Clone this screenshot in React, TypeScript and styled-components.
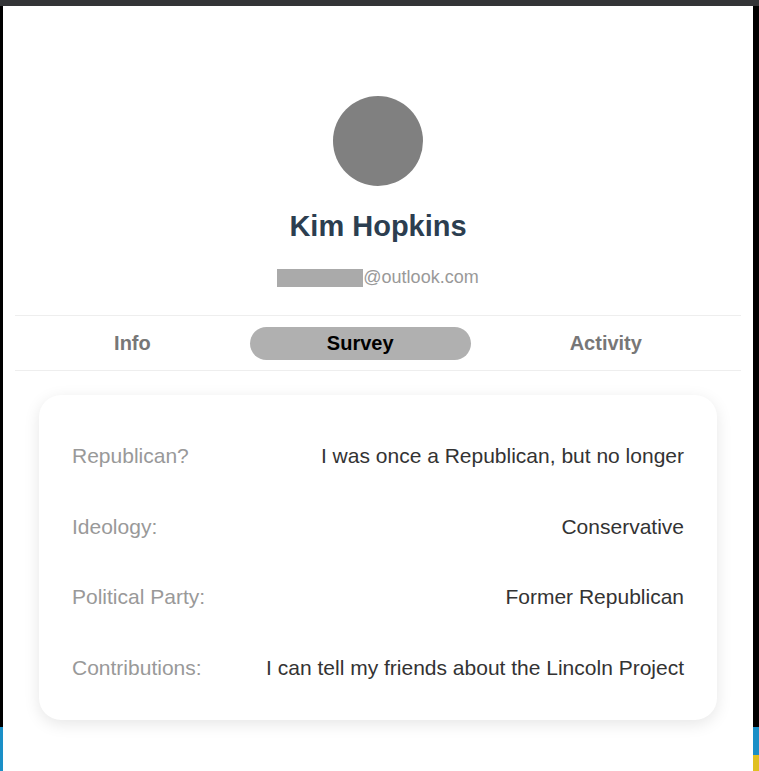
import React from "react";
import styled, { createGlobalStyle } from "styled-components";

const Global = createGlobalStyle`
  html, body { margin: 0; padding: 0; background: #000; }
  body { font-family: "Liberation Sans", Arial, sans-serif; }
  * { box-sizing: border-box; }
`;

const Page = styled.div`
  width: 759px;
  height: 771px;
  display: flex;
  flex-direction: column;
  overflow: hidden;
  background: #000;
`;

const TopBar = styled.div`
  height: 6px;
  flex: none;
  background: #333437;
`;

const Body = styled.div`
  flex: 1;
  display: flex;
`;

const Strip = styled.div<{ $w: number; $yellow?: boolean }>`
  width: ${(p) => p.$w}px;
  flex: none;
  background: ${(p) =>
    p.$yellow
      ? "linear-gradient(to bottom, #000 0px, #000 721px, #1a8fc7 721px, #1a8fc7 749px, #e0c020 749px)"
      : "linear-gradient(to bottom, #000 0px, #000 721px, #1a8fc7 721px)"};
`;

const Panel = styled.div`
  flex: 1;
  background: #fff;
  display: flex;
  flex-direction: column;
  align-items: center;
  padding-top: 90px;
`;

const Avatar = styled.div`
  width: 90px;
  height: 90px;
  border-radius: 50%;
  background: #808080;
`;

const Name = styled.h1`
  margin: 23px 0 0;
  font-size: 29px;
  line-height: 34px;
  font-weight: 700;
  color: #2c3e50;
`;

const Email = styled.div`
  margin-top: 24px;
  display: flex;
  align-items: center;
  font-size: 18px;
  line-height: 21px;
  color: #999;
`;

const Redacted = styled.span`
  display: inline-block;
  width: 86px;
  height: 18px;
  background: #aaa;
`;

const Tabs = styled.div`
  align-self: stretch;
  margin: 27px 12px 0 12px;
  height: 56px;
  border-top: 1px solid #eee;
  border-bottom: 1px solid #eee;
  display: flex;
  align-items: center;
  justify-content: space-evenly;
`;

const Tab = styled.button<{ $active?: boolean }>`
  border: none;
  font-family: inherit;
  font-size: 20px;
  font-weight: 700;
  height: 33px;
  padding: 1px 77px 0;
  border-radius: 17px;
  background: ${(p) => (p.$active ? "#b0b0b0" : "transparent")};
  color: ${(p) => (p.$active ? "#000" : "#777")};
  cursor: pointer;
`;

const Card = styled.div`
  align-self: stretch;
  margin: 24px 36px 0 36px;
  padding: 26px 33px 17px;
  border-radius: 22px;
  background: #fff;
  box-shadow: 0 4px 16px rgba(0, 0, 0, 0.1);
`;

const Row = styled.div`
  height: 70.5px;
  display: flex;
  align-items: center;
  justify-content: space-between;
  font-size: 21px;
`;

const Label = styled.span`
  color: #999;
`;

const Value = styled.span`
  color: #333;
`;

const rows: [string, string][] = [
  ["Republican?", "I was once a Republican, but no longer"],
  ["Ideology:", "Conservative"],
  ["Political Party:", "Former Republican"],
  ["Contributions:", "I can tell my friends about the Lincoln Project"],
];

export default function App() {
  return (
    <Page>
      <Global />
      <TopBar />
      <Body>
        <Strip $w={3} />
        <Panel>
          <Avatar />
          <Name>Kim Hopkins</Name>
          <Email>
            <Redacted />
            @outlook.com
          </Email>
          <Tabs>
            <Tab>Info</Tab>
            <Tab $active>Survey</Tab>
            <Tab>Activity</Tab>
          </Tabs>
          <Card>
            {rows.map(([l, v]) => (
              <Row key={l}>
                <Label>{l}</Label>
                <Value>{v}</Value>
              </Row>
            ))}
          </Card>
        </Panel>
        <Strip $w={6} $yellow />
      </Body>
    </Page>
  );
}
